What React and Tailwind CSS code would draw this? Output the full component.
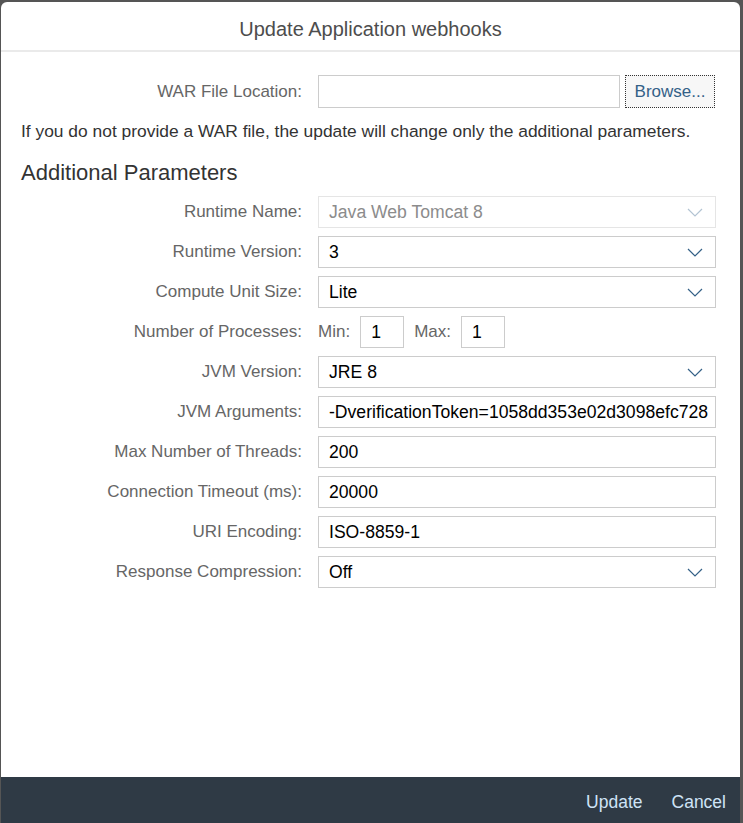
import React from 'react';

const font = { fontFamily: '"Liberation Sans", Arial, sans-serif' };

function Chevron({ disabled }) {
  return (
    <svg width="16" height="9" viewBox="0 0 16 9" className="shrink-0">
      <path
        d="M1 1 L8 8 L15 1"
        fill="none"
        stroke={disabled ? '#b3c4d3' : '#346187'}
        strokeWidth="1.2"
      />
    </svg>
  );
}

function Label({ children }) {
  return (
    <div className="w-[297px] shrink-0 pr-[16px] text-right text-[17px] text-[#666666] leading-[32px]">
      {children}
    </div>
  );
}

function TextRow({ label, value }) {
  return (
    <div className="flex items-center h-[32px]">
      <Label>{label}</Label>
      <div className="w-[398px] h-[32px] border border-[#cccccc] bg-white px-[10px] flex items-center text-[17.6px] text-[#000000] overflow-hidden whitespace-nowrap">
        {value}
      </div>
    </div>
  );
}

function SelectRow({ label, value, disabled }) {
  return (
    <div className="flex items-center h-[32px]">
      <Label>{label}</Label>
      <div
        className={
          disabled
            ? 'w-[398px] h-[32px] border border-[#e5e5e5] bg-white pl-[10px] pr-[12px] flex items-center justify-between text-[17.6px] text-[#8c8c8c]'
            : 'w-[398px] h-[32px] border border-[#cccccc] bg-white pl-[10px] pr-[12px] flex items-center justify-between text-[17.6px] text-[#000000]'
        }
      >
        <span>{value}</span>
        <Chevron disabled={disabled} />
      </div>
    </div>
  );
}

export default function App() {
  return (
    <div className="w-[743px] h-[823px] bg-[#555555] overflow-hidden" style={font}>
      <div className="ml-[1px] mt-[2px] w-[739px] h-[821px] bg-white rounded-t-[6px] flex flex-col">
        {/* Header */}
        <div className="h-[50px] shrink-0 pt-[6px] border-b-2 border-[#eaeaea] flex items-center justify-center text-[20px] text-[#4d4d4d]">
          Update Application webhooks
        </div>

        {/* Body */}
        <div className="flex-1 pl-[20px] pt-[23px]">
          <div className="flex items-center h-[33px]">
            <Label>WAR File Location:</Label>
            <div className="w-[302px] h-[33px] border border-[#cccccc] bg-white"></div>
            <button className="ml-[5px] w-[90px] h-[33px] bg-[#f7f7f7] border border-dotted border-[#333333] text-[17px] text-[#346187]">
              Browse...
            </button>
          </div>

          <p className="mt-[12px] text-[17.4px] leading-[22px] text-[#333333]">
            If you do not provide a WAR file, the update will change only the additional parameters.
          </p>

          <h2 className="mt-[18px] text-[22px] leading-[26px] text-[#333333]">Additional Parameters</h2>

          <div className="mt-[10px] flex flex-col gap-[8px]">
            <SelectRow label="Runtime Name:" value="Java Web Tomcat 8" disabled />
            <SelectRow label="Runtime Version:" value="3" />
            <SelectRow label="Compute Unit Size:" value="Lite" />
            <div className="flex items-center h-[32px]">
              <Label>Number of Processes:</Label>
              <span className="text-[17px] text-[#666666]">Min:</span>
              <div className="ml-[10px] w-[44px] h-[32px] border border-[#cccccc] px-[10px] flex items-center text-[17.6px] text-[#000000]">1</div>
              <span className="ml-[10px] text-[17px] text-[#666666]">Max:</span>
              <div className="ml-[10px] w-[44px] h-[32px] border border-[#cccccc] px-[10px] flex items-center text-[17.6px] text-[#000000]">1</div>
            </div>
            <SelectRow label="JVM Version:" value="JRE 8" />
            <TextRow label="JVM Arguments:" value="-DverificationToken=1058dd353e02d3098efc728" />
            <TextRow label="Max Number of Threads:" value="200" />
            <TextRow label="Connection Timeout (ms):" value="20000" />
            <TextRow label="URI Encoding:" value="ISO-8859-1" />
            <SelectRow label="Response Compression:" value="Off" />
          </div>
        </div>

        {/* Footer */}
        <div className="h-[46px] shrink-0 pt-[5px] bg-[#2f3a45] flex items-center justify-end pr-[14px] gap-[29px] text-[17.5px] text-[#cfe4f7]">
          <span>Update</span>
          <span>Cancel</span>
        </div>
      </div>
    </div>
  );
}
